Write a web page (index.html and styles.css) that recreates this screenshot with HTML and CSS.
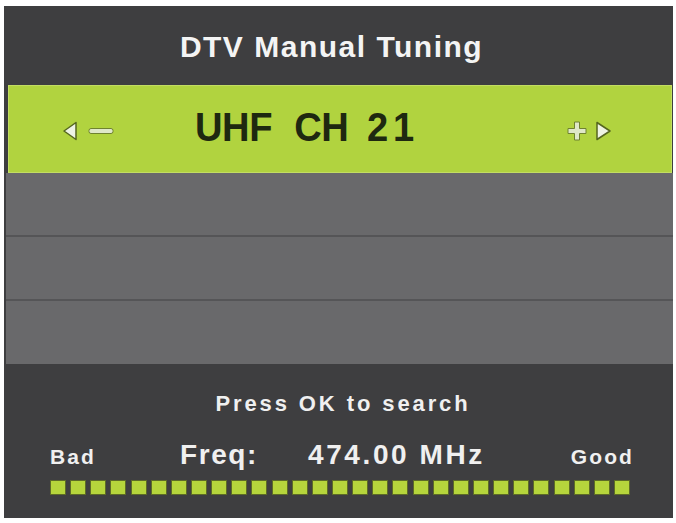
FILE: index.html
```html
<!DOCTYPE html>
<html>
<head>
<meta charset="utf-8">
<link rel="stylesheet" href="styles.css">
</head>
<body>
<div class="screen">
  <div class="header">DTV Manual Tuning</div>
  <div class="selected">
    <div class="ctrl left">
      <svg width="60" height="24" viewBox="0 0 60 24">
        <polygon points="15,3.5 3,12 15,20.5" fill="#eef3e4" stroke="#55661f" stroke-width="1.5" stroke-linejoin="round"/>
        <rect x="28" y="9.5" width="24" height="5" rx="2" fill="#dfe8c8" stroke="#6f8230" stroke-width="1"/>
      </svg>
    </div>
    <div class="channel"><span>UHF</span><span class="ch">CH</span><span class="num">21</span></div>
    <div class="ctrl right">
      <svg width="60" height="24" viewBox="0 0 60 24">
        <path d="M8.5 3 h5 v6.5 h6.5 v5 h-6.5 v6.5 h-5 v-6.5 h-6.5 v-5 h6.5 z" fill="#dfe8c8" stroke="#6f8230" stroke-width="1" stroke-linejoin="round"/>
        <polygon points="31,3.5 44,12 31,20.5" fill="#eef3e4" stroke="#55661f" stroke-width="1.5" stroke-linejoin="round"/>
      </svg>
    </div>
  </div>
  <div class="row"></div>
  <div class="row"></div>
  <div class="row last"></div>
  <div class="footer">
    <div class="hint">Press OK to search</div>
    <div class="freq-line">
      <span class="end">Bad</span>
      <span class="freq"><span class="label">Freq:</span><span class="value">474.00 MHz</span></span>
      <span class="end good">Good</span>
    </div>
    <div class="meter">
      <span class="cell"></span><span class="cell"></span><span class="cell"></span><span class="cell"></span><span class="cell"></span>
      <span class="cell"></span><span class="cell"></span><span class="cell"></span><span class="cell"></span><span class="cell"></span>
      <span class="cell"></span><span class="cell"></span><span class="cell"></span><span class="cell"></span><span class="cell"></span>
      <span class="cell"></span><span class="cell"></span><span class="cell"></span><span class="cell"></span><span class="cell"></span>
      <span class="cell"></span><span class="cell"></span><span class="cell"></span><span class="cell"></span><span class="cell"></span>
      <span class="cell"></span><span class="cell"></span><span class="cell"></span><span class="cell"></span>
    </div>
  </div>
</div>
</body>
</html>
```

FILE: styles.css
```css
html, body {
  margin: 0;
  padding: 0;
  background: #ffffff;
}

body {
  font-family: "Liberation Sans", Arial, sans-serif;
  font-weight: bold;
}

.screen {
  margin: 6px 0 0 4px;
  width: 669px;
  height: 512px;
  background: #3e3e40;
  display: flex;
  flex-direction: column;
}

.header {
  height: 79px;
  flex: none;
  display: flex;
  align-items: center;
  justify-content: center;
  color: #f4f4f4;
  font-size: 30px;
  letter-spacing: 1.5px;
  padding: 2px 14px 0 0;
  box-sizing: border-box;
}

.selected {
  height: 88px;
  flex: none;
  margin-left: 4px;
  margin-right: 1px;
  background: #b1d33f;
  box-shadow: inset 0 0 0 1px #c3dd62;
  display: flex;
  align-items: center;
}

.ctrl {
  width: 60px;
  flex: none;
  display: flex;
  padding-top: 4px;
}

.ctrl.left {
  margin-left: 53px;
}

.ctrl.right {
  margin-left: auto;
  margin-right: 46px;
}

.channel {
  margin-left: 74px;
  display: flex;
  color: #1e2810;
  font-size: 41px;
  letter-spacing: -0.5px;
  transform: scaleX(0.93);
  transform-origin: left center;
  padding-bottom: 4px;
}

.ch {
  margin-left: 24px;
}

.num {
  margin-left: 20px;
  letter-spacing: 5px;
}

.row {
  height: 64px;
  flex: none;
  margin-left: 2px;
  background: #69696b;
  border-bottom: 2px solid #555557;
  box-sizing: border-box;
}

.row:first-of-type {
  height: 66px;
}

.row.last {
  height: 63px;
  border-bottom: none;
}

.footer {
  flex: 1;
  display: flex;
  flex-direction: column;
  padding: 0 39px 0 46px;
}

.hint {
  margin-top: 28px;
  text-align: center;
  color: #f0f0f0;
  font-size: 22px;
  letter-spacing: 2.9px;
  line-height: 24px;
  padding-left: 2px;
}

.freq-line {
  margin-top: 24px;
  display: flex;
  align-items: baseline;
  color: #f0f0f0;
  line-height: 30px;
}

.end {
  font-size: 21px;
  letter-spacing: 2.1px;
}

.good {
  margin-left: auto;
}

.freq {
  font-size: 28px;
  letter-spacing: 1.6px;
  display: flex;
  gap: 50px;
  margin-left: 84px;
}

.freq .value {
  letter-spacing: 2.6px;
}

.meter {
  margin-top: 8px;
  margin-right: 4px;
  display: flex;
  justify-content: space-between;
}

.cell {
  width: 14px;
  height: 13px;
  background: #b6d53c;
  border: 1px solid #5d6b27;
}
```
